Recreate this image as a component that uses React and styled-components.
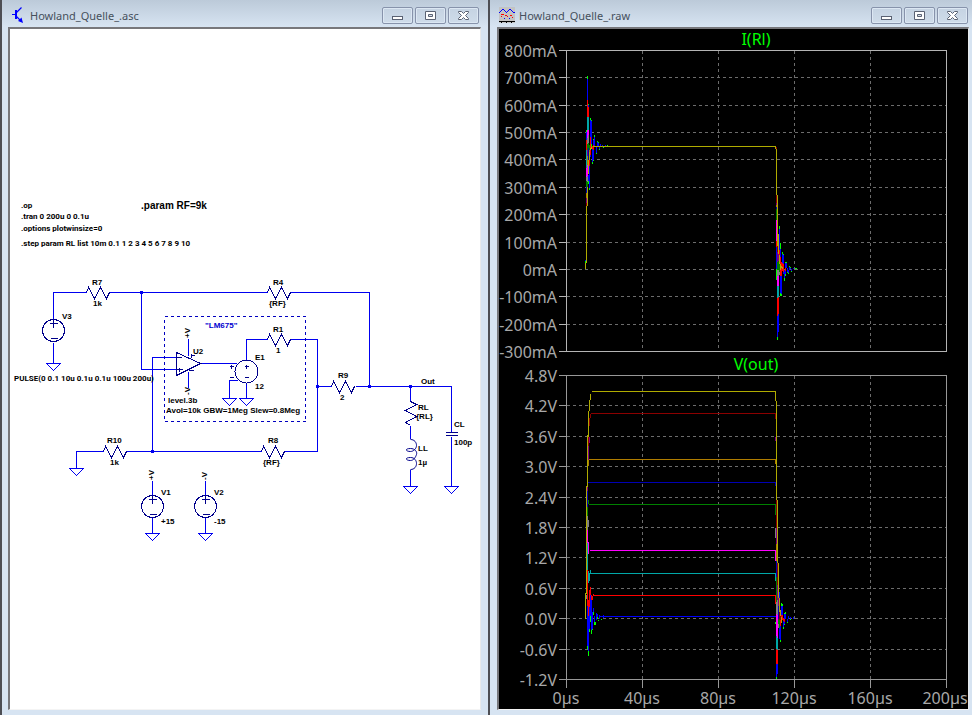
import styled, { createGlobalStyle } from "styled-components";

const GlobalStyle = createGlobalStyle`
  * {
    box-sizing: border-box;
  }
  body {
    margin: 0;
    background: #d7e4f2;
    font-family: "Noto Sans", "Open Sans", sans-serif;
  }
`;

const Desktop = styled.main`
  display: grid;
  grid-template-columns: 488fr 484fr;
  height: 100vh;
`;

const Window = styled.section`
  display: flex;
  flex-direction: column;
  min-width: 0;
  min-height: 0;
  border-left: 2px solid #4d4e54;
  padding: ${props => (props.$last ? "0 3px 5px 7px" : "0 7px 5px 6px")};
  background: linear-gradient(#bccad9, #d7e4f2 27px);
`;

const TitleBar = styled.header`
  display: flex;
  align-items: flex-start;
  flex: none;
  height: 27px;
  padding: ${props => (props.$last ? "7px 1px 0 2px" : "7px 2px 0")};
`;

const Title = styled.h1`
  flex: 1;
  margin: 0 0 0 4px;
  color: #46505c;
  font-size: 11px;
  font-weight: 400;
  line-height: 17px;
  white-space: nowrap;
`;

const Buttons = styled.div`
  display: flex;
  gap: 2px;
`;

const WinButton = styled.button`
  display: flex;
  align-items: center;
  justify-content: center;
  width: 31px;
  height: 17px;
  padding: 0;
  border: 1px solid #8793ab;
  border-radius: 2px;
  background: linear-gradient(#c5d3e2, #cfdcea);
  box-shadow: inset 0 0 0 1px #dce7f3;
`;

const Client = styled.div`
  flex: 1;
  min-height: 0;
  border: solid;
  border-width: 2px 1px 1px 2px;
  border-color: #77777b #e8eaec #f4f4f4 #77777b;
  background: ${props => props.$bg};
`;

const Drawing = styled.svg`
  display: block;
  width: 100%;
  height: 100%;
`;

const Note = styled.text`
  font-family: "Liberation Sans", Arial, sans-serif;
  font-size: ${props => props.$size || 8}px;
  font-weight: 700;
  fill: ${props => props.$color || "#000"};
`;

const Directive = styled(Note)`
  font-family: Roboto, "Liberation Sans", sans-serif;
`;

const AxisText = styled.text`
  font-size: 16px;
  fill: ${props => props.$color || "#a8a8a8"};
  text-anchor: ${props => props.$anchor || "middle"};
`;

/* ---------- icons ---------- */

const SchematicIcon = () => (
  <svg width="16" height="16" viewBox="0 0 16 16" fill="none" stroke="#0000ff" aria-hidden="true">
    <path d="M6 3v9" strokeWidth="2" />
    <path d="M2 7.5h3M6 6l5.500-5.500M6 9l5 5" strokeWidth="1.200" />
    <path d="M13 16l-5-2 3.500-3.500z" fill="#0000ff" stroke="none" />
  </svg>
);

const WaveIcon = () => (
  <svg width="16" height="16" viewBox="0 0 16 16" shapeRendering="crispEdges" aria-hidden="true">
    <rect width="16" height="16" fill="#c3c3c3" />
    <path d="M0 5.500h1M1 4.500h1M2 3.500h1M3 2.500h2M5 3.500h1M6 4.500h1M7 5.500h1M8 4.500h1M9 3.500h1M10 2.500h2M12 3.500h1M13 4.500h1M14 5.500h2" stroke="#0000ff" />
    <path d="M2 7.500h3M6 8.500h2M11 8.500h2M2 9.500h1M8 9.500h1M13 10.500h1" stroke="#ff0000" />
    <path d="M5 11.500h1M10 11.500h1" stroke="#0000ff" />
    <path d="M0 14.500h16M2.500 15v1M7.500 15v1M12.500 15v1" stroke="#000" />
  </svg>
);

const glyphs = {
  Minimize: <rect x="1.500" y="6.500" width="10" height="3" />,
  Maximize: (
    <>
      <path d="M1.500 1.500h10v8h-10z" />
      <path d="M4.500 4.500h4v2h-4z" fill="#d7e0ea" />
    </>
  ),
  Close: <path d="M1.500 1.500h3l2 2 2-2h3v1l-3 3 3 3v1h-3l-2-2-2 2h-3v-1l3-3-3-3z" />,
};

const TitleButton = ({ name }) => (
  <WinButton type="button" aria-label={name}>
    <svg width="13" height="11" viewBox="0 0 13 11" fill="#fff" stroke="#5a6273">
      {glyphs[name]}
    </svg>
  </WinButton>
);

/* ---------- schematic ---------- */

const wires = [
  "M53 319V292H86M109 292H267M290 292H369V386",
  "M141 292V369H176M176 357H152V451",
  "M200 363H236M246 360V339H267M290 339H317V451H284",
  "M261 451H126M103 451H76V468",
  "M317 386H331M355 386H451V432M451 436V486",
  "M410 386V401M410 425V438M410 469V486",
  "M53 342V363M237 380H229V398M246 383V398",
  "M188 338V355M188 371V387",
  "M152 480V495M152 517V533M205 480V495M205 517V533",
];

const grounds = [[53, 363], [76, 468], [229, 398], [246, 398], [410, 486], [451, 486], [152, 533], [205, 533]];
const junctions = [[141, 292], [152, 451], [317, 386], [369, 386], [410, 386]];
const resistors = [[86, 292], [267, 292], [267, 339], [261, 451], [103, 451], [331, 386]];
const sources = [[53, 330], [152, 506], [205, 506]];

const directives = [
  [21, 208, ".op"],
  [21, 219, ".tran 0 200u 0 0.1u"],
  [21, 231, ".options plotwinsize=0"],
  [21, 246, ".step param RL list 10m 0.1 1 2 3 4 5 6 7 8 9 10"],
  [14, 381, "PULSE(0 0.1 10u 0.1u 0.1u 100u 200u)"],
];

const notes = [
  [92, 285, "R7"], [93, 306, "1k"], [62, 319, "V3"],
  [273, 285, "R4"], [269, 306, "{RF}"],
  [273, 332, "R1"], [276, 353, "1"],
  [193, 354, "U2"], [255, 360, "E1"], [255, 389, "12"],
  [168, 403, "level.3b"],
  [166, 413, "Avol=10k GBW=1Meg Slew=0.8Meg"],
  [338, 378, "R9"], [340, 400, "2"], [421, 384, "Out"],
  [268, 443, "R8"], [263, 465, "{RF}"],
  [107, 443, "R10"], [110, 465, "1k"],
  [418, 410, "RL"], [416, 419, "{RL}"],
  [418, 451, "LL"], [418, 465, "1µ"],
  [454, 427, "CL"], [454, 445, "100p"],
  [161, 495, "V1"], [161, 524, "+15"],
  [214, 495, "V2"], [214, 524, "-15"],
];

const rails = [[190, 338, "+V"], [190, 395, "-V"], [154, 480, "+V"], [207, 480, "-V"]];

const Schematic = () => (
  <Drawing viewBox="10 29 470 680" role="img" aria-label="Howland source schematic">
    <g transform="translate(.5 .5)" fill="none" shapeRendering="crispEdges">
      <path d={wires.join("")} stroke="#0000f0" />
      <g stroke="#0000f0">
        {grounds.map(([x, y]) => (
          <path key={x + "-" + y} d={`M${x - 7} ${y}h14l-7 7z`} />
        ))}
      </g>
      <g stroke="#00008b">
        {resistors.map(([x, y]) => (
          <path key={x + "-" + y} d={`M${x} ${y}l2 -5l6 11l6 -11l6 11l3 -6`} />
        ))}
        {sources.map(([x, y]) => (
          <g key={x}>
            <circle cx={x} cy={y} r="11" />
            <path d={`M${x} ${y - 11}v8M${x - 4} ${y - 7}h8M${x - 3} ${y + 8}h7`} />
          </g>
        ))}
        <path d="M176 352V375L200 363Z" />
        <path d="M176 357h5M176 369h6M179 367v4M190 355h4M191 353v4M188 370h5" />
        <circle cx="246" cy="371" r="11.500" />
        <path d="M244 366h4M246 364v4M244 377h4M229 366h4M231 364v4M229 377h4" />
        <path d="M410 401l6 3l-11 6l11 6l-11 6l5 3" />
        <path
          d="M410 439c4 0 6 3 6 6s-3 6-6 6c-5 0-6-3 0-3 4 0 7 3 6 6s-3 6-6 6c-5 0-6-3 0-3 4 0 6 3 6 6s-2 6-6 6"
          shapeRendering="geometricPrecision"
        />
        <path d="M445 432h12M445 435h12" />
      </g>
      <path d="M164 316H305V421H164Z" stroke="#0000c0" strokeDasharray="3 3" />
    </g>
    <g fill="#0000f0">
      {junctions.map(([x, y]) => (
        <rect key={x} x={x - 1} y={y - 1} width="3" height="3" />
      ))}
    </g>
    {directives.map(([x, y, label]) => (
      <Directive key={y} x={x} y={y}>{label}</Directive>
    ))}
    {notes.map(([x, y, label]) => (
      <Note key={x + "-" + y} x={x} y={y}>{label}</Note>
    ))}
    <Note x="141" y="209" $size={10}>.param RF=9k</Note>
    <Note x="205" y="328" $color="#0000d0">"LM675"</Note>
    {rails.map(([x, y, label]) => (
      <Note key={x + "-" + y} transform={`translate(${x} ${y}) rotate(-90)`}>{label}</Note>
    ))}
  </Drawing>
);

/* ---------- plots ---------- */

const colors = {
  y: "#b0ac00",
  m: "#8b0000",
  p: "#800080",
  o: "#b07c00",
  n: "#0000b4",
  g: "#008000",
  s: "#808080",
  f: "#ff00ff",
  c: "#00a8a8",
  r: "#ff0000",
  b: "#0000ff",
  l: "#00ff00",
};

// one entry per pixel column: x, then colour + start row; the last number ends the run
const current = [
  [585, "b260 l261 y263 269"],
  [586, "l130 b132 r140 c150 f168 s177 g181 n187 o193 p198 m203 y206 263"],
  [587, "l76 b79 r100 c117 f130 s138 g144 p150 o156 f165 s176 g182 y187 206"],
  [588, "l104 b105 r107 c117 f130 s135 g143 n148 y160 174"],
  [588, "b175 l181 184"],
  [589, "g145 o150 y152 r160 b166 l188 190"],
  [590, "l118 b120 r137 y148 r150 b155 157"],
  [591, "l120 b121 l144 y147 149"],
  [592, "r146 b149 l162 164"],
  [593, "l139 b140 r145 b150 l160 161"],
  [594, "l135 b137 146"],
  [596, "b147 l153 154"],
  [597, "l141 b142 146"],
  [598, "l142 b143 146"],
  [599, "b147 l149 150"],
  [600, "b144 146"],
  [602, "b145 146"],
  [603, "l147 148"],
  [605, "b145 146"],
  [607, "l145 146"],
  [775, "y146 149"],
  [776, "m147 y149 m195 p203 o205 n207 g209 f220 r241 b247 l269 280"],
  [777, "y195 m246 p252 g262 s270 f276 c286 r298 b316 l337 340"],
  [778, "y234 p254 g261 s270 f276 c286 r297 b314 332"],
  [779, "l226 b229 r250 y255 g264 s272 275"],
  [780, "l243 b249 r257 y264 r270 b276 l293 296"],
  [781, "r262 y266 r268 b276 l294 296"],
  [782, "l252 b254 r263 y267 r269 271"],
  [783, "l254 b255 r264 b272 274"],
  [784, "b270 l278 281"],
  [785, "l262 b263 r268 b271 l274 276"],
  [786, "l262 b263 268"],
  [787, "b268 l272 273"],
  [788, "b270 l273 274"],
  [789, "l266 b267 270"],
  [790, "l267 b268 269"],
  [791, "b269 l271 272"],
  [793, "b268 269"],
  [795, "l268 269"],
  [796, "l268 269"],
];

const voltage = [
  [585, "y593 619"],
  [586, "y486 594"],
  [586, "s595 599"],
  [587, "y435 p487 n491 g507 s516 f530 c543 r570 b606 l646 649"],
  [588, "y411 m437 p446 o460 466"],
  [588, "g500 504"],
  [588, "s520 527"],
  [588, "f542 554"],
  [588, "c571 583"],
  [588, "r600 b616 l651 656"],
  [589, "y400 411"],
  [589, "m418 426"],
  [589, "p437 443"],
  [589, "c573 581"],
  [589, "r590 b607 l629 632"],
  [590, "y394 400"],
  [590, "m414 418"],
  [590, "c570 574"],
  [590, "r587 b595 l616 622"],
  [591, "r595 b600 l630 634"],
  [592, "r596 600"],
  [592, "b612 l629 630"],
  [593, "r594 596"],
  [593, "b608 l612 615"],
  [594, "b616 l622 625"],
  [595, "l622 625"],
  [596, "b613 620"],
  [597, "b614 l617 619"],
  [598, "l620 621"],
  [599, "b615 619"],
  [601, "l619 620"],
  [603, "b615 618"],
  [775, "y391 401"],
  [775, "m413 419"],
  [775, "p437 441"],
  [775, "o459 464"],
  [775, "n482 486"],
  [775, "g504 515"],
  [775, "s528 538"],
  [775, "f550 561"],
  [775, "c573 581"],
  [775, "r595 604"],
  [775, "l622 624"],
  [776, "y401 m500 p528 o544 n561 g577 s602 f614 c636 r649 b664 l677 679"],
  [777, "y500 m563 p585 s600 f615 c638 r650 b664 674"],
  [778, "y563 p598 n606 g619 s624 628"],
  [779, "b592 y598 m612 g620 b628 639"],
  [780, "y610 m616 r620 b626 l640 642"],
  [781, "l603 b606 r615 y617 623"],
  [782, "l604 b606 r615 620"],
  [783, "r618 b621 l627 629"],
  [784, "l613 b614 r619 b622 l624 625"],
  [785, "l612 b614 619"],
  [787, "b619 l622 623"],
  [788, "b616 619"],
  [790, "b617 l619 620"],
  [793, "b617 619"],
];

const levels = [
  ["y", 391, 592], ["m", 413, 591], ["o", 459, 589], ["n", 482, 587], ["g", 504, 589],
  ["f", 550, 590], ["c", 573, 591], ["r", 595, 593], ["b", 616, 600],
];

const Trace = ({ columns }) =>
  columns.map(([x, runs], i) => {
    const parts = runs.split(" ");
    return parts.slice(0, -1).map((run, j) => {
      const top = Number(run.slice(1));
      const end = Number(parts[j + 1].replace(/[a-z]/, ""));
      return <rect key={i + "-" + j} x={x} y={top} width="1" height={end - top} fill={colors[run[0]]} />;
    });
  });

const timeGrid = [642, 718, 794, 870];

const Axes = ({ rows, title, color }) => {
  const top = rows[0][0];
  const bottom = rows[rows.length - 1][0];
  return (
    <>
      <g transform="translate(.5 .5)" fill="none" shapeRendering="crispEdges">
        {rows.slice(1, -1).map(([y]) => (
          <path key={y} d={`M566 ${y}H946`} stroke="#6c6c6c" strokeDasharray="3 3" />
        ))}
        {timeGrid.map(x => (
          <path key={x} d={`M${x} ${top}V${bottom}`} stroke="#6c6c6c" strokeDasharray="3 3" />
        ))}
        <path d={`M566 ${top}H946V${bottom}H566Z`} stroke={color} />
        <path d={rows.map(([y]) => `M558 ${y}H566`).join("")} stroke={color} />
      </g>
      {rows.map(([y, label]) => (
        <AxisText key={y} x="557" y={y + 7} $anchor="end">{label}</AxisText>
      ))}
      <AxisText x="756" y={top - 5} $color="#00ff00">{title}</AxisText>
    </>
  );
};

const currentRows = [
  [50, "800mA"], [77, "700mA"], [105, "600mA"], [132, "500mA"], [159, "400mA"], [187, "300mA"],
  [214, "200mA"], [242, "100mA"], [269, "0mA"], [296, "-100mA"], [324, "-200mA"], [351, "-300mA"],
];

const voltageRows = [
  [375, "4.8V"], [405, "4.2V"], [436, "3.6V"], [466, "3.0V"], [497, "2.4V"], [527, "1.8V"],
  [557, "1.2V"], [588, "0.6V"], [618, "0.0V"], [649, "-0.6V"], [679, "-1.2V"],
];

const times = [[566, "0µs"], [642, "40µs"], [718, "80µs"], [794, "120µs"], [870, "160µs"], [945, "200µs"]];

const Plots = () => (
  <Drawing viewBox="499 29 469 680" role="img" aria-label="Load current and output voltage over time">
    <Axes rows={currentRows} title="I(Rl)" color="#b4b4b4" />
    <Axes rows={voltageRows} title="V(out)" color="#989898" />
    <path
      d={[566, ...timeGrid, 946].map(x => `M${x} 679V687`).join("")}
      transform="translate(.5 .5)"
      stroke="#989898"
      shapeRendering="crispEdges"
    />
    {times.map(([x, label]) => (
      <AxisText key={x} x={x} y="704">{label}</AxisText>
    ))}
    <g shapeRendering="crispEdges">
      <Trace columns={current} />
      <rect x="593" y="146" width="183" height="1" fill={colors.y} />
      {levels.map(([c, y, x]) => (
        <rect key={y} x={x} y={y} width={776 - x} height="1" fill={colors[c]} />
      ))}
      <Trace columns={voltage} />
    </g>
  </Drawing>
);

const ChildWindow = ({ title, icon, bg, last, children }) => (
  <Window $last={last}>
    <TitleBar $last={last}>
      {icon}
      <Title>{title}</Title>
      <Buttons>
        <TitleButton name="Minimize" />
        <TitleButton name="Maximize" />
        <TitleButton name="Close" />
      </Buttons>
    </TitleBar>
    <Client $bg={bg}>{children}</Client>
  </Window>
);

const App = () => (
  <>
    <GlobalStyle />
    <Desktop>
      <ChildWindow title="Howland_Quelle_.asc" icon={<SchematicIcon />} bg="#fff">
        <Schematic />
      </ChildWindow>
      <ChildWindow title="Howland_Quelle_.raw" icon={<WaveIcon />} bg="#000" last>
        <Plots />
      </ChildWindow>
    </Desktop>
  </>
);

export default App;
